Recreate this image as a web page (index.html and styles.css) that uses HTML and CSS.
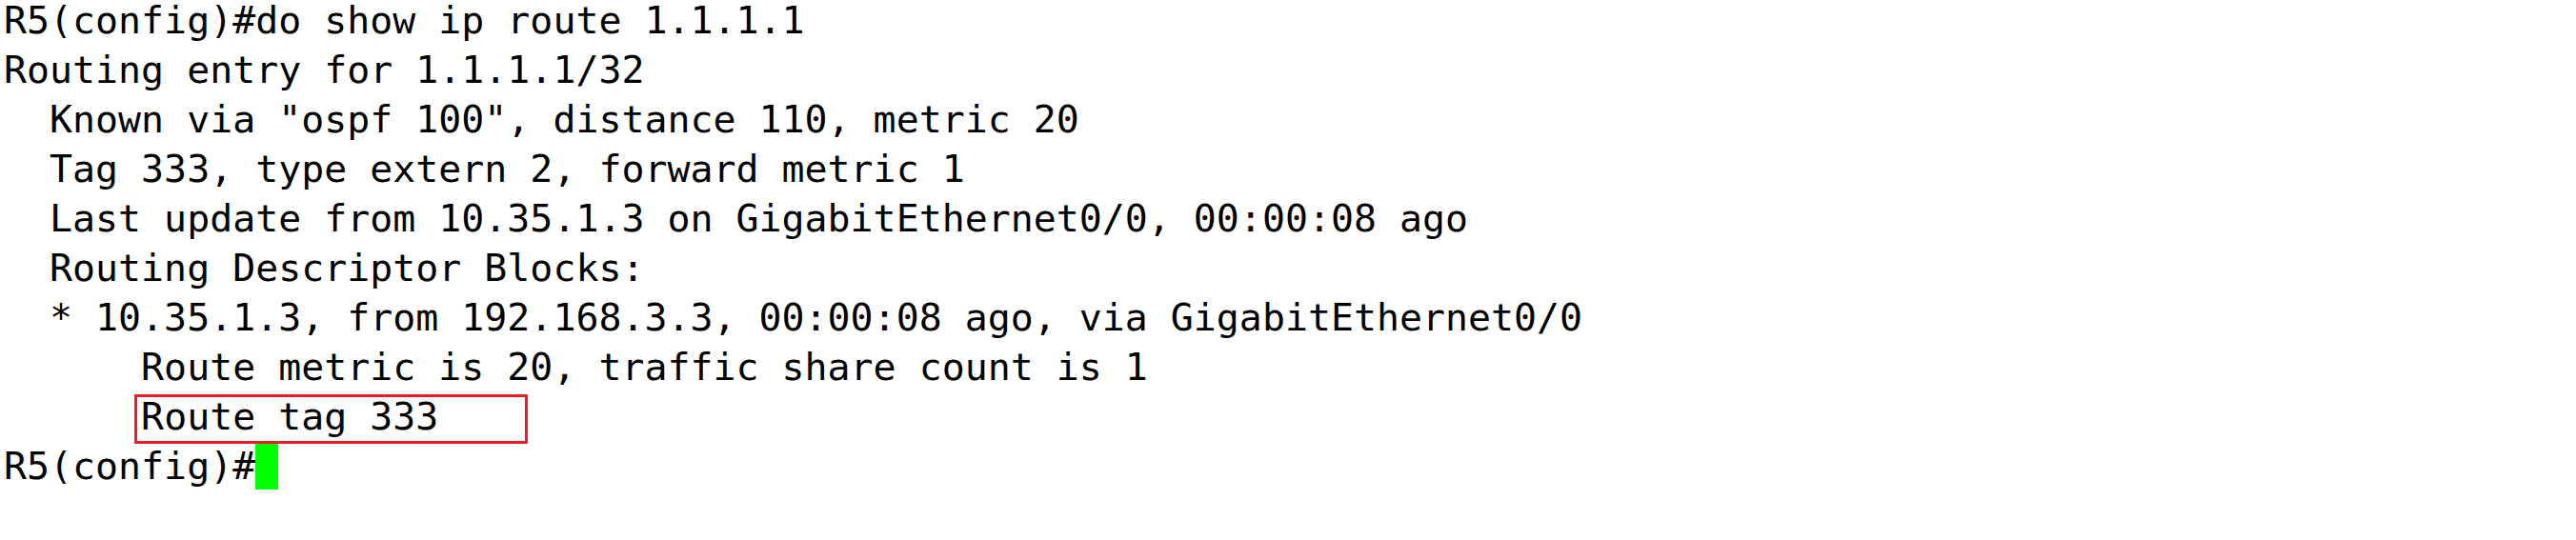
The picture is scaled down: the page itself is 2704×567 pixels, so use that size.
FILE: index.html
```html
<!DOCTYPE html>
<html>
<head>
<meta charset="utf-8">
<link rel="stylesheet" href="styles.css">
</head>
<body>
<pre class="term">R5(config)#do show ip route 1.1.1.1
Routing entry for 1.1.1.1/32
  Known via "ospf 100", distance 110, metric 20
  Tag 333, type extern 2, forward metric 1
  Last update from 10.35.1.3 on GigabitEthernet0/0, 00:00:08 ago
  Routing Descriptor Blocks:
  * 10.35.1.3, from 192.168.3.3, 00:00:08 ago, via GigabitEthernet0/0
      Route metric is 20, traffic share count is 1
      <span class="hl">Route tag 333</span>
R5(config)#<span class="cursor"></span></pre>
</body>
</html>
```

FILE: styles.css
```css
html, body {
  margin: 0;
  padding: 0;
  background: #ffffff;
}
.term {
  margin: -5px 0 0 0;
  padding: 0 0 0 4px;
  font-family: "DejaVu Sans Mono", "Liberation Mono", monospace;
  font-size: 39.9px;
  line-height: 52px;
  color: #000000;
  white-space: pre;
}
.hl {
  position: relative;
}
.hl::after {
  content: "";
  position: absolute;
  left: -7px;
  top: 0;
  width: 413px;
  height: 52px;
  box-sizing: border-box;
  border: 3px solid #ec1c24;
  border-radius: 1px;
}
.cursor {
  display: inline-block;
  width: 24px;
  height: 48px;
  background: #00ff00;
  vertical-align: -11px;
}
```
